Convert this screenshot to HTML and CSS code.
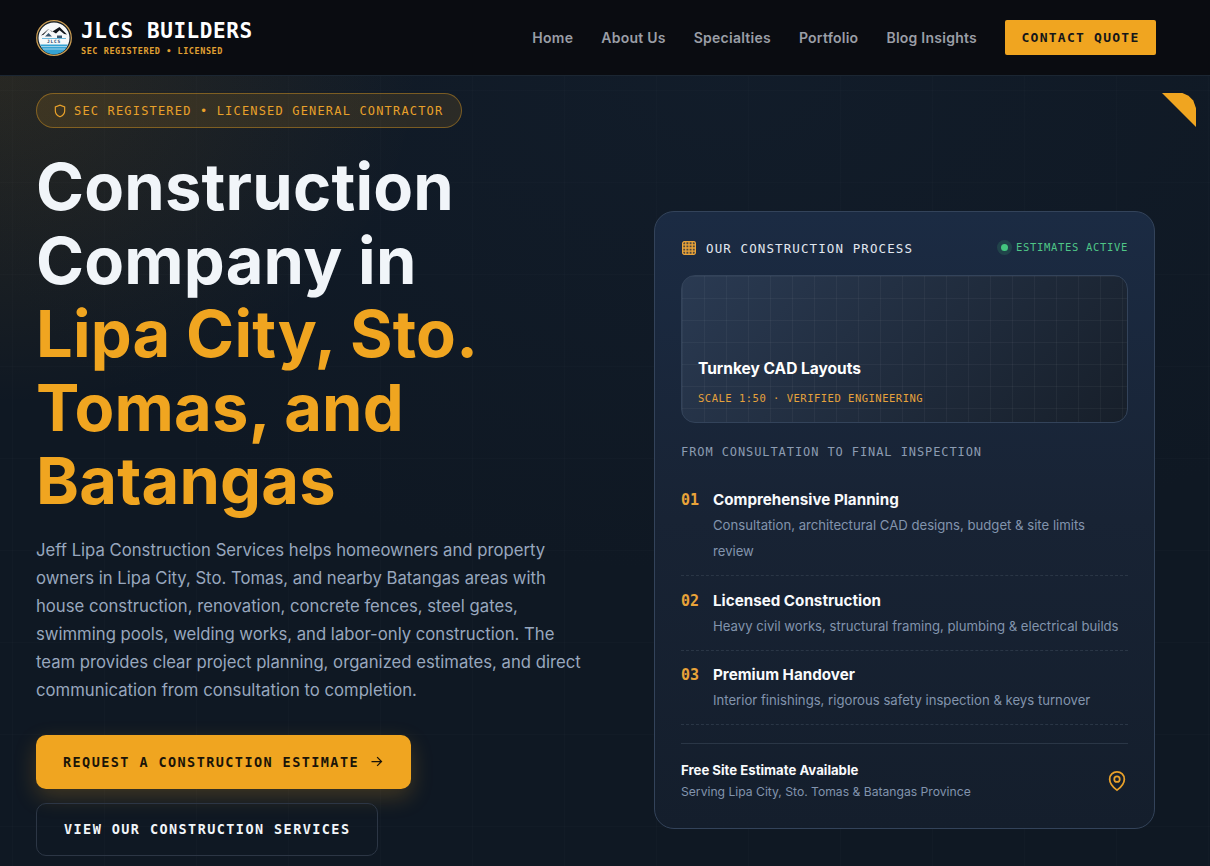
FILE: index.html
```html
<!DOCTYPE html>
<html lang="en">
<head>
    <meta charset="UTF-8">
    <meta name="viewport" content="width=device-width, initial-scale=1.0">
    <title>JLCS Builders | Construction Company in Lipa City</title>
    <link rel="stylesheet" href="styles.css">
</head>
<body>
    <header class="site-header">
        <a class="brand" href="#">
            <svg class="brand-logo" viewBox="0 0 36 36" aria-hidden="true">
                <circle cx="18" cy="18" r="17.300" fill="#0f1a22" stroke="#c79a52" stroke-width="1.300"/>
                <circle cx="18" cy="18" r="15.500" fill="#f6f8f8"/>
                <path d="M4.200 24.500h27.600a15.500 15.500 0 0 1-1.500 3.500l-1 1.500a15.500 15.500 0 0 1-22.600 0l-1-1.500a15.500 15.500 0 0 1-1.500-3.500z" fill="#35a2d2"/>
                <path d="M5 26.500h26M7 29h22" stroke="#e8f4f8" stroke-width="0.600" fill="none"/>
                <path d="M5 15.500 12.500 9l3.500 2.800L23.500 7 31 14.500l-2.800-.5-4.700-3.800-3.500 3.300-2.500-1.500-5-2.800-5 5.500z" fill="#12161c"/>
                <path d="M9 16.500 12.500 13l3.500 3.500zM21 15.500h5v2.500h-5z" fill="#39566e"/>
                <path d="M6 18.500h24" stroke="#35a2d2" stroke-width="0.700"/>
                <text x="18" y="22.500" class="logo-letters">JLCS</text>
            </svg>
            <span class="brand-text">
                <span class="brand-name">JLCS BUILDERS</span>
                <span class="brand-sub">SEC REGISTERED • LICENSED</span>
            </span>
        </a>
        <nav class="main-nav">
            <a href="#">Home</a>
            <a href="#">About Us</a>
            <a href="#">Specialties</a>
            <a href="#">Portfolio</a>
            <a href="#">Blog Insights</a>
        </nav>
        <a class="contact-btn" href="#">CONTACT QUOTE</a>
    </header>

    <main class="hero">
        <div class="corner-mark"></div>

        <section class="hero-copy">
            <div class="hero-badge">
                <svg class="icon-shield" viewBox="0 0 24 24" aria-hidden="true">
                    <path d="M12 22s8-3.500 8-10V5l-8-3-8 3v7c0 6.500 8 10 8 10z"/>
                </svg>
                SEC REGISTERED • LICENSED GENERAL CONTRACTOR
            </div>
            <h1>Construction<br>Company in<br><span class="accent">Lipa City, Sto.<br>Tomas, and<br>Batangas</span></h1>
            <p class="hero-text">Jeff Lipa Construction Services helps homeowners and property owners in Lipa City, Sto. Tomas, and nearby Batangas areas with house construction, renovation, concrete fences, steel gates, swimming pools, welding works, and labor-only construction. The team provides clear project planning, organized estimates, and direct communication from consultation to completion.</p>
            <div class="hero-actions">
                <a class="btn btn-primary" href="#">
                    REQUEST A CONSTRUCTION ESTIMATE
                    <svg class="icon-arrow" viewBox="0 0 24 24" aria-hidden="true">
                        <path d="M4 12h16M13 5l7 7-7 7"/>
                    </svg>
                </a>
                <a class="btn btn-outline" href="#">VIEW OUR CONSTRUCTION SERVICES</a>
            </div>
        </section>

        <aside class="process-card">
            <div class="card-head">
                <div class="card-title">
                    <svg class="icon-grid" viewBox="0 0 14 14" aria-hidden="true">
                        <rect x="0.600" y="0.600" width="12.800" height="12.800" rx="2"/>
                        <path d="M0.600 3.800h12.800M0.600 7h12.800M0.600 10.200h12.800M3.800 0.600v12.800M7 0.600v12.800M10.200 0.600v12.800"/>
                    </svg>
                    OUR CONSTRUCTION PROCESS
                </div>
                <div class="card-status"><span class="status-dot"></span>ESTIMATES ACTIVE</div>
            </div>

            <div class="cad-panel">
                <h3>Turnkey CAD Layouts</h3>
                <p>SCALE 1:50 · VERIFIED ENGINEERING</p>
            </div>

            <div class="process-label">FROM CONSULTATION TO FINAL INSPECTION</div>

            <ul class="steps">
                <li class="step">
                    <span class="step-num">01</span>
                    <div>
                        <h4>Comprehensive Planning</h4>
                        <p>Consultation, architectural CAD designs, budget &amp; site limits review</p>
                    </div>
                </li>
                <li class="step step-mid">
                    <span class="step-num">02</span>
                    <div>
                        <h4>Licensed Construction</h4>
                        <p>Heavy civil works, structural framing, plumbing &amp; electrical builds</p>
                    </div>
                </li>
                <li class="step">
                    <span class="step-num">03</span>
                    <div>
                        <h4>Premium Handover</h4>
                        <p>Interior finishings, rigorous safety inspection &amp; keys turnover</p>
                    </div>
                </li>
            </ul>

            <div class="card-foot">
                <div>
                    <strong>Free Site Estimate Available</strong>
                    <span>Serving Lipa City, Sto. Tomas &amp; Batangas Province</span>
                </div>
                <svg class="icon-pin" viewBox="0 0 24 24" aria-hidden="true">
                    <path d="M20 10c0 6-8 12-8 12s-8-6-8-12a8 8 0 0 1 16 0z"/>
                    <circle cx="12" cy="10" r="3"/>
                </svg>
            </div>
        </aside>
    </main>
</body>
</html>
```

FILE: styles.css
```css
* {
    margin: 0;
    padding: 0;
    box-sizing: border-box;
}

body {
    font-family: 'Inter', 'Liberation Sans', sans-serif;
    background: #0f1823;
    color: #f1f5f9;
    overflow: hidden;
    height: 866px;
}

a {
    text-decoration: none;
    color: inherit;
}

/* header */
.site-header {
    height: 76px;
    padding: 0 54px 0 36px;
    display: flex;
    align-items: center;
    background: #0a0c11;
    border-bottom: 1px solid #1b2632;
}

.brand {
    display: flex;
    align-items: center;
    gap: 9px;
    margin-right: auto;
}

.brand-logo {
    width: 36px;
    height: 36px;
}

.logo-letters {
    font-family: 'DejaVu Sans Mono', monospace;
    font-weight: 700;
    font-size: 4.500px;
    fill: #1c3f6b;
    text-anchor: middle;
    letter-spacing: 0.800px;
}

.brand-text {
    display: flex;
    flex-direction: column;
    padding-top: 1px;
}

.brand-name {
    font-family: 'DejaVu Sans Mono', monospace;
    font-weight: 700;
    font-size: 21px;
    letter-spacing: 0.560px;
    line-height: 24px;
    color: #fff;
}

.brand-sub {
    margin-top: 1px;
    font-family: 'DejaVu Sans Mono', monospace;
    font-weight: 700;
    font-size: 8.500px;
    letter-spacing: 0.560px;
    line-height: 14px;
    color: #e0a032;
}

.main-nav {
    display: flex;
    gap: 28px;
    font-size: 14px;
    font-weight: 600;
    letter-spacing: 0.250px;
    color: #9a9ea6;
}

.contact-btn {
    margin-left: 28px;
    width: 151px;
    height: 35px;
    display: flex;
    align-items: center;
    justify-content: center;
    background: #f0a520;
    border-radius: 2px;
    color: #15161a;
    font-family: 'DejaVu Sans Mono', monospace;
    font-weight: 700;
    font-size: 13px;
    letter-spacing: 1.250px;
}

/* hero */
.hero {
    position: relative;
    height: 790px;
    padding: 17px 55px 0 36px;
    display: flex;
    justify-content: space-between;
    align-items: flex-start;
    background-color: #0f1823;
    background-image:
        radial-gradient(ellipse 420px 330px at 0 0, rgba(240, 165, 32, 0.11), transparent 100%),
        radial-gradient(ellipse 800px 500px at 60% 0, rgba(30, 48, 72, 0.18), transparent 100%),
        linear-gradient(rgba(255, 255, 255, 0.012) 1px, transparent 1px),
        linear-gradient(90deg, rgba(255, 255, 255, 0.012) 1px, transparent 1px);
    background-size: auto, auto, 92px 92px, 92px 92px;
    background-position: 0 0, 0 0, 12px 14px, 12px 14px;
}

.corner-mark {
    position: absolute;
    top: 17px;
    right: 14px;
    width: 34px;
    height: 34px;
    background: #f0a520;
    clip-path: polygon(0 0, 60% 0, 78% 8%, 92% 22%, 100% 45%, 100% 100%);
}

.hero-copy {
    width: 550px;
}

.hero-badge {
    display: inline-flex;
    align-items: center;
    gap: 7px;
    height: 35px;
    padding: 0 18px 0 16px;
    border: 1px solid rgba(240, 165, 32, 0.4);
    border-radius: 18px;
    background: rgba(240, 165, 32, 0.12);
    color: #e9a12a;
    font-family: 'DejaVu Sans Mono', monospace;
    font-size: 12px;
    letter-spacing: 1.170px;
}

.icon-shield {
    width: 14px;
    height: 14px;
    fill: none;
    stroke: #e9a12a;
    stroke-width: 2;
}

h1 {
    margin-top: 22px;
    font-size: 65px;
    line-height: 73.500px;
    font-weight: 700;
    letter-spacing: 0.200px;
    color: #f1f5f9;
}

.accent {
    color: #f0a520;
}

.hero-text {
    margin-top: 18px;
    width: 550px;
    font-size: 16.700px;
    line-height: 28px;
    font-weight: 400;
    color: #98a7be;
}

.hero-actions {
    margin-top: 31px;
    display: flex;
    flex-direction: column;
    align-items: flex-start;
    gap: 14px;
}

.btn {
    display: inline-flex;
    align-items: center;
    font-family: 'DejaVu Sans Mono', monospace;
    font-weight: 700;
    font-size: 13.500px;
    letter-spacing: 1.420px;
    padding: 0 27px;
}

.btn-primary {
    height: 54px;
    gap: 10px;
    background: #f0a520;
    color: #1a1408;
    border-radius: 10px;
    box-shadow: 0 8px 22px rgba(240, 165, 32, 0.22);
}

.icon-arrow {
    width: 15px;
    height: 15px;
    fill: none;
    stroke: #1a1408;
    stroke-width: 2;
}

.btn-outline {
    height: 53px;
    border: 1px solid #2c3645;
    border-radius: 10px;
    color: #f1f5f9;
}

/* process card */
.process-card {
    margin-top: 118px;
    width: 501px;
    height: 618px;
    padding: 26px 26px;
    border: 1px solid #33435a;
    border-radius: 20px;
    background: linear-gradient(180deg, #1b2b43 0%, #182334 50%, #141e2c 100%);
}

.card-head {
    display: flex;
    align-items: center;
    justify-content: space-between;
    height: 20px;
}

.card-title {
    display: flex;
    align-items: center;
    gap: 10px;
    font-family: 'DejaVu Sans Mono', monospace;
    font-size: 12.500px;
    letter-spacing: 1.100px;
    color: #e2e8f0;
}

.icon-grid {
    width: 14px;
    height: 14px;
    margin-left: 1px;
    fill: rgba(233, 163, 57, 0.25);
    stroke: #e9a339;
    stroke-width: 1.300;
}

.card-status {
    display: flex;
    align-items: center;
    gap: 5px;
    padding-bottom: 2px;
    font-family: 'DejaVu Sans Mono', monospace;
    font-size: 10.500px;
    letter-spacing: 0.680px;
    color: #4fc687;
}

.status-dot {
    width: 7px;
    height: 7px;
    margin: 0 3px;
    border-radius: 50%;
    background: #43c77f;
    box-shadow: 0 0 0 4px rgba(67, 199, 127, 0.16);
}

.cad-panel {
    margin-top: 17px;
    height: 148px;
    padding: 83px 16px 0;
    border: 1px solid #33435a;
    border-radius: 14px;
    background-image:
        linear-gradient(rgba(255, 255, 255, 0.04) 1px, transparent 1px),
        linear-gradient(90deg, rgba(255, 255, 255, 0.04) 1px, transparent 1px),
        linear-gradient(135deg, #2a3a52 0%, #171f2a 100%);
    background-size: 22px 22px, 22px 22px, auto;
}

.cad-panel h3 {
    font-size: 15.500px;
    line-height: 20px;
    font-weight: 700;
    color: #fff;
}

.cad-panel p {
    margin-top: 13px;
    font-family: 'DejaVu Sans Mono', monospace;
    font-size: 10.500px;
    letter-spacing: 0.500px;
    color: #e6a23c;
}

.process-label {
    margin-top: 22px;
    font-family: 'DejaVu Sans Mono', monospace;
    font-size: 12px;
    letter-spacing: 0.910px;
    line-height: 14px;
    color: #8c9cb2;
}

.steps {
    list-style: none;
    margin-top: 17px;
}

.step {
    display: flex;
    gap: 14px;
    padding: 13px 0 11px;
    border-bottom: 1px dashed #2a3646;
}

.step-mid {
    padding-top: 14px;
}

.step-num {
    width: 18px;
    font-family: 'DejaVu Sans Mono', monospace;
    font-weight: 700;
    font-size: 15px;
    line-height: 22px;
    color: #e9a339;
}

.step h4 {
    font-size: 15.200px;
    line-height: 22px;
    font-weight: 700;
    color: #f8fafc;
}

.step p {
    margin-top: 1px;
    font-size: 13.150px;
    line-height: 26px;
    color: #8294ad;
}

.card-foot {
    margin-top: 18px;
    padding-top: 16px;
    border-top: 1px solid #2a3646;
    display: flex;
    align-items: center;
    justify-content: space-between;
}

.card-foot strong {
    display: block;
    font-size: 13.200px;
    line-height: 20px;
    font-weight: 700;
    color: #f8fafc;
}

.card-foot span {
    display: block;
    margin-top: 1px;
    font-size: 12.150px;
    line-height: 21px;
    color: #8294ad;
}

.icon-pin {
    width: 22px;
    height: 22px;
    fill: none;
    stroke: #e9a12a;
    stroke-width: 1.900;
}
```
